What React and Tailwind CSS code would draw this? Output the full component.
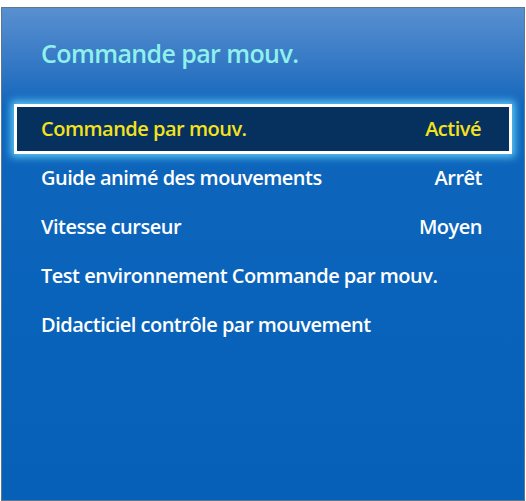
const ROWS = [
  { label: "Guide animé des mouvements", value: "Arrêt" },
  { label: "Vitesse curseur", value: "Moyen" },
  { label: "Test environnement Commande par mouv." },
  { label: "Didacticiel contrôle par mouvement" },
];

export default function App() {
  return (
    <div className="h-[501px] w-[526px] bg-white pt-[7px] pl-px" style={{ fontFamily: '"Open Sans", "Liberation Sans", sans-serif' }}>
      <div className="h-[494px] w-[524px] border border-[#5f7690] bg-gradient-to-b from-[#5890d0] via-[#0e66bc] via-[20%] to-[#0660b8]">
        <h1 className="pl-[39px] pt-[27px] text-[25px] font-semibold tracking-[-0.6px] text-[#8ff0ec]">
          Commande par mouv.
        </h1>

        <div className="mx-[12px] mt-[31px] flex h-[50px] items-center justify-between border-[3px] border-white bg-[#06305e] pl-[24px] pr-[28px] shadow-[0_0_8px_3px_rgba(110,220,255,0.85)]">
          <span className="text-[20px] font-semibold tracking-[-0.5px] text-[#f4e21c]">Commande par mouv.</span>
          <span className="text-[20px] font-semibold tracking-[-0.5px] text-[#f4e21c]">Activé</span>
        </div>

        <ul>
          {ROWS.map((r) => (
            <li key={r.label} className="flex h-[49px] items-center justify-between pl-[39px] pr-[42px] text-[20px] font-semibold tracking-[-0.5px] text-white">
              <span>{r.label}</span>
              {r.value && <span>{r.value}</span>}
            </li>
          ))}
        </ul>
      </div>
    </div>
  );
}
